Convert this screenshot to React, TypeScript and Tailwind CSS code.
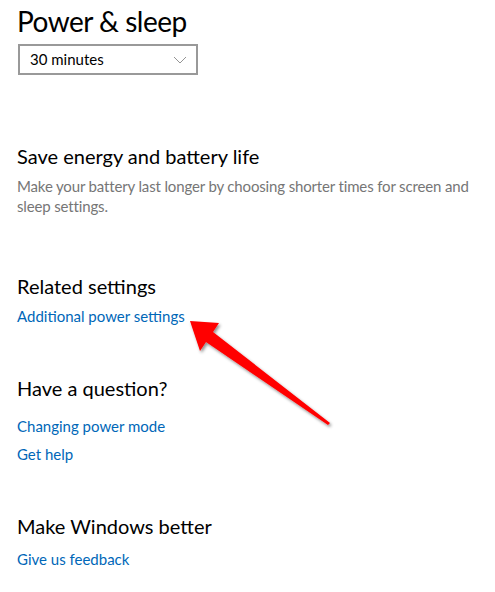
const links = {
  related: ['Additional power settings'],
  question: ['Changing power mode', 'Get help'],
  better: ['Give us feedback'],
};

function Link({ label }: { label: string }) {
  return <a className="block text-[15px] leading-[28px] text-[#0067b8]">{label}</a>;
}

export default function App() {
  return (
    <div className="relative w-[495px] h-[592px] bg-white overflow-hidden text-black pl-[17px] pt-[2px]" style={{ fontFamily: '"Segoe UI", Lato, sans-serif' }}>
      <h1 className="text-[28px] leading-[38px] font-normal tracking-[-0.5px]">Power &amp; sleep</h1>
      <div className="mt-[4px] ml-[1px] w-[180px] h-[31px] border-2 border-[#999999] flex items-center justify-between pl-[10px] pr-[8px]">
        <span className="text-[15px]">30 minutes</span>
        <svg width="14" height="8" viewBox="0 0 14 8" className="mr-[1px]">
          <path d="M1 1 L7 7 L13 1" fill="none" stroke="#888" strokeWidth="0.9" />
        </svg>
      </div>

      <section className="mt-[67px]">
        <h2 className="text-[20px] leading-[28px]">Save energy and battery life</h2>
        <p className="mt-[6px] w-[478px] text-[15px] leading-[20px] text-[#767676] tracking-[-0.15px]">
          Make your battery last longer by choosing shorter times for screen and sleep settings.
        </p>
      </section>

      <section className="mt-[56px]">
        <h2 className="text-[20px] leading-[28px]">Related settings</h2>
        <div className="mt-[2px]">
          {links.related.map((l) => <Link key={l} label={l} />)}
        </div>
      </section>

      <section className="mt-[44px]">
        <h2 className="text-[20px] leading-[28px]">Have a question?</h2>
        <div className="mt-[10px]">
          {links.question.map((l) => <Link key={l} label={l} />)}
        </div>
      </section>

      <section className="mt-[44px]">
        <h2 className="text-[20px] leading-[28px]">Make Windows better</h2>
        <div className="mt-[5px]">
          {links.better.map((l) => <Link key={l} label={l} />)}
        </div>
      </section>

      {/* red callout arrow */}
      <svg className="absolute left-0 top-0 pointer-events-none" width="495" height="592" viewBox="0 0 495 592">
        <defs>
          <filter id="shadow" x="-20%" y="-20%" width="140%" height="140%">
            <feDropShadow dx="1.5" dy="2" stdDeviation="1.5" floodColor="#000" floodOpacity="0.45" />
          </filter>
        </defs>
        <polygon
          points="190,321 219,323 213,332 330,423 328,425 206,342 200,351"
          fill="#ff0000"
          filter="url(#shadow)"
        />
      </svg>
    </div>
  );
}
